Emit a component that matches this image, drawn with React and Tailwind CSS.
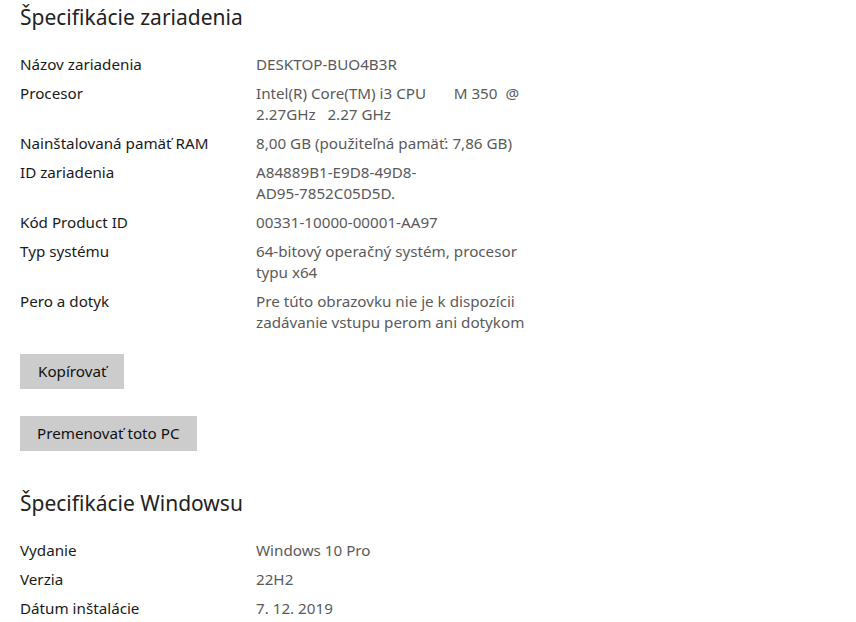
export default function App() {
  const rows = [
    ["Názov zariadenia", ["DESKTOP-BUO4B3R"]],
    ["Procesor", ["Intel(R) Core(TM) i3 CPU       M 350  @", "2.27GHz   2.27 GHz"]],
    ["Nainštalovaná pamäť RAM", ["8,00 GB (použiteľná pamäť: 7,86 GB)"]],
    ["ID zariadenia", ["A84889B1-E9D8-49D8-", "AD95-7852C05D5D."]],
    ["Kód Product ID", ["00331-10000-00001-AA97"]],
    ["Typ systému", ["64-bitový operačný systém, procesor", "typu x64"]],
    ["Pero a dotyk", ["Pre túto obrazovku nie je k dispozícii", "zadávanie vstupu perom ani dotykom"]],
  ];
  const win = [
    ["Vydanie", "Windows 10 Pro"],
    ["Verzia", "22H2"],
    ["Dátum inštalácie", "7. 12. 2019"],
  ];
  return (
    <div className="w-[856px] h-[622px] bg-white overflow-hidden pl-[20px] pt-[2px] text-[15.2px] leading-[21px] text-[#1a1a1a]" style={{ fontFamily: '"Noto Sans", sans-serif' }}>
      <h1 className="text-[21px] leading-[30px] font-normal text-[#222]">Špecifikácie zariadenia</h1>
      <div className="mt-[22px] flex flex-col gap-[8px]">
        {rows.map(([k, v]) => (
          <div key={k} className="flex">
            <div className="w-[236px] shrink-0">{k}</div>
            <div className="text-[#5a5a5a] whitespace-pre">
              {v.map((l, i) => (
                <div key={i}>{l}</div>
              ))}
            </div>
          </div>
        ))}
      </div>
      <button className="mt-[21px] block h-[35px] px-[18px] bg-[#cccccc] text-[#111]">Kopírovať</button>
      <button className="mt-[27px] block h-[35px] px-[17px] bg-[#cccccc] text-[#111]">Premenovať toto PC</button>
      <h1 className="mt-[37px] text-[21px] leading-[30px] font-normal text-[#222]">Špecifikácie Windowsu</h1>
      <div className="mt-[22px] flex flex-col gap-[8px]">
        {win.map(([k, v]) => (
          <div key={k} className="flex">
            <div className="w-[236px] shrink-0">{k}</div>
            <div className="text-[#5a5a5a]">{v}</div>
          </div>
        ))}
      </div>
    </div>
  );
}
